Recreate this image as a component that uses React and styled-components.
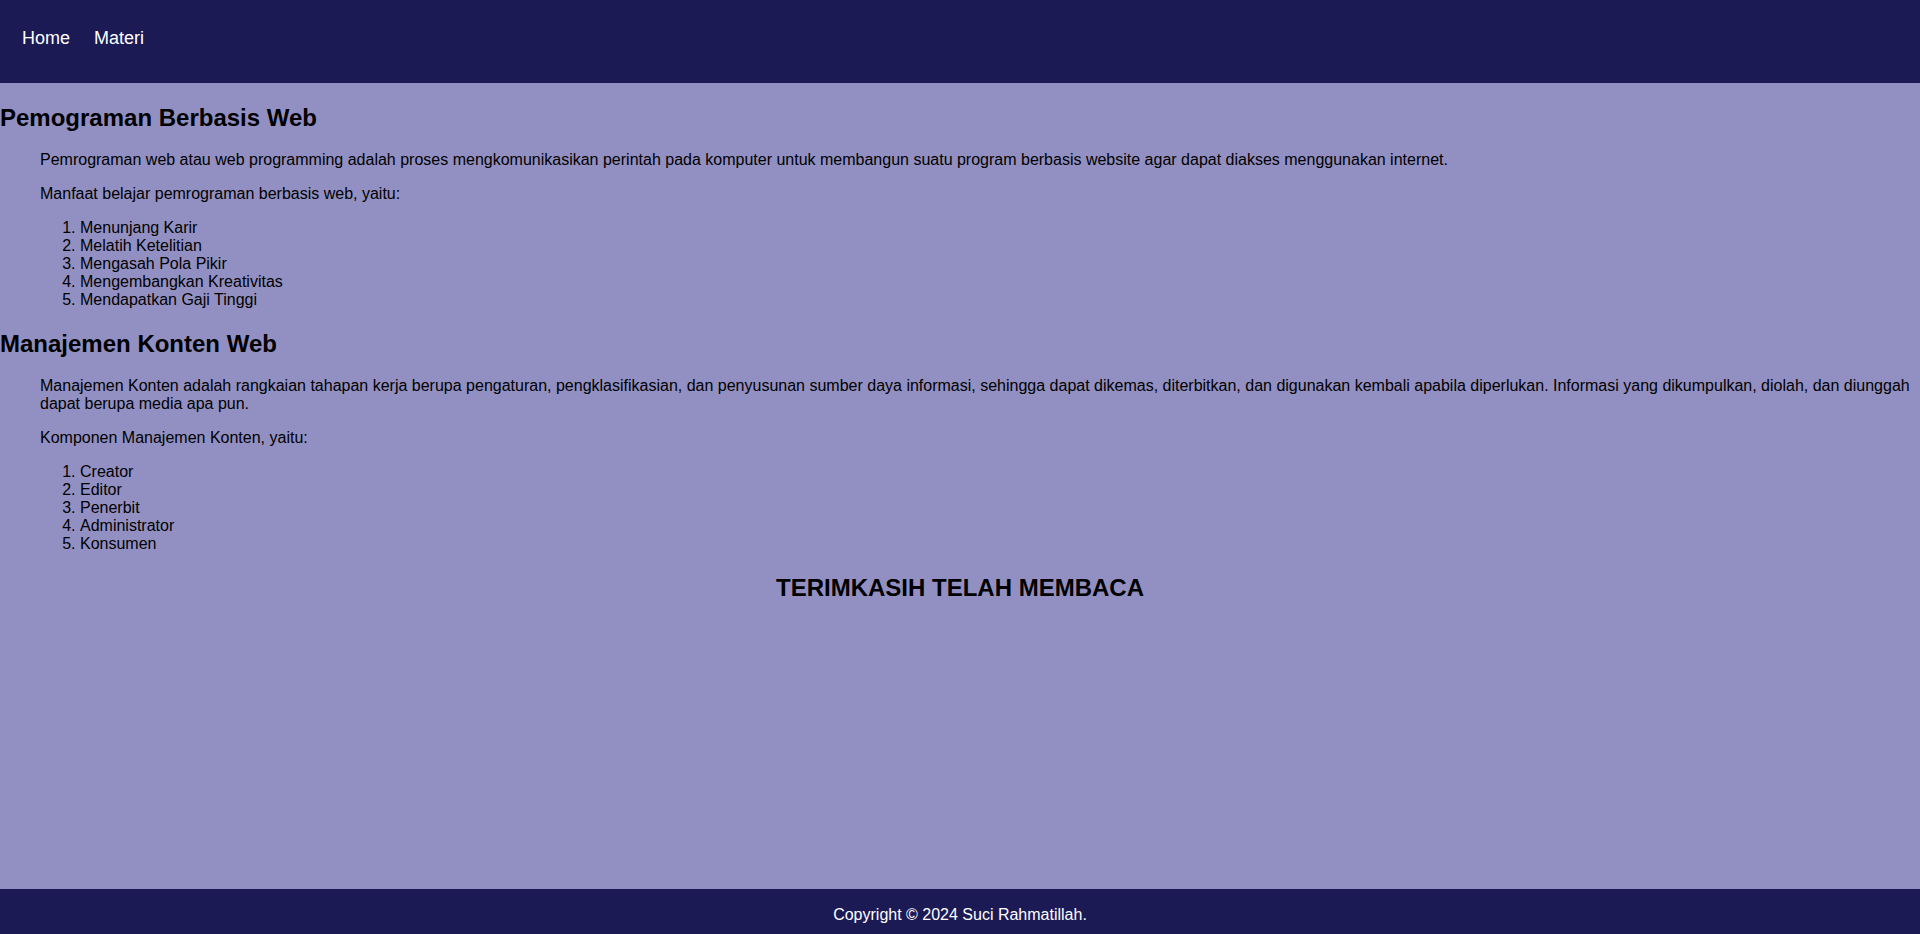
import React from 'react'
import styled, {createGlobalStyle} from 'styled-components'

const color = {
    navy: '#1b1a55',
    lilac: '#9290c3',
    white: '#ffffff',
    black: '#000000',
}

const GlobalStyle = createGlobalStyle`
    html, body {
        margin: 0;
        padding: 0;
        height: 100%;
    }
    body {
        font-family: "Liberation Sans", Arial, sans-serif;
        font-size: 16px;
        background-color: ${color.lilac};
        color: ${color.black};
    }
    #root {
        min-height: 100%;
    }
`;

const Page = styled.div`
    display: flex;
    flex-direction: column;
    min-height: 100vh;
`;

const Header = styled.header`
    background-color: ${color.navy};
    height: 83px;
    display: flex;
    align-items: flex-start;
    padding: 28px 0 0 22px;
    box-sizing: border-box;
`;

const Nav = styled.nav`
    display: flex;
    gap: 24px;
`;

const NavLink = styled.a`
    color: ${color.white};
    font-size: 18px;
    text-decoration: none;
    cursor: pointer;
`;

const Main = styled.main`
    flex: 1;
`;

const Title = styled.h2`
    font-size: 24px;
    font-weight: bold;
    margin: 21px 0 19px;
    text-align: ${p => p.center ? 'center' : 'left'};
`;

// isi materi masuk 40px dari kiri
const Content = styled.section`
    padding-left: 40px;
`;

const Text = styled.p`
    margin: 16px 0;
`;

const List = styled.ol`
    margin: 16px 0;
    padding-left: 40px;
`;

const Footer = styled.footer`
    background-color: ${color.navy};
    color: ${color.white};
    height: 45px;
    box-sizing: border-box;
    padding-top: 17px;
    text-align: center;
    font-size: 16px;
`;

const materi = [
    {
        judul: 'Pemograman Berbasis Web',
        isi: 'Pemrograman web atau web programming adalah proses mengkomunikasikan perintah pada komputer untuk membangun suatu program berbasis website agar dapat diakses menggunakan internet.',
        pengantar: 'Manfaat belajar pemrograman berbasis web, yaitu:',
        daftar: ['Menunjang Karir', 'Melatih Ketelitian', 'Mengasah Pola Pikir', 'Mengembangkan Kreativitas', 'Mendapatkan Gaji Tinggi'],
    },
    {
        judul: 'Manajemen Konten Web',
        isi: 'Manajemen Konten adalah rangkaian tahapan kerja berupa pengaturan, pengklasifikasian, dan penyusunan sumber daya informasi, sehingga dapat dikemas, diterbitkan, dan digunakan kembali apabila diperlukan. Informasi yang dikumpulkan, diolah, dan diunggah dapat berupa media apa pun.',
        pengantar: 'Komponen Manajemen Konten, yaitu:',
        daftar: ['Creator', 'Editor', 'Penerbit', 'Administrator', 'Konsumen'],
    },
]

export default () => {
    return (
        <Page>
            <GlobalStyle />
            <Header>
                <Nav>
                    <NavLink>Home</NavLink>
                    <NavLink>Materi</NavLink>
                </Nav>
            </Header>
            <Main>
                {
                    materi.map(m => (
                        <div key={m.judul}>
                            <Title>{m.judul}</Title>
                            <Content>
                                <Text>{m.isi}</Text>
                                <Text>{m.pengantar}</Text>
                                <List>
                                    {m.daftar.map(d => <li key={d}>{d}</li>)}
                                </List>
                            </Content>
                        </div>
                    ))
                }
                <Title center>TERIMKASIH TELAH MEMBACA</Title>
            </Main>
            <Footer>Copyright © 2024 Suci Rahmatillah.</Footer>
        </Page>
    )
}
